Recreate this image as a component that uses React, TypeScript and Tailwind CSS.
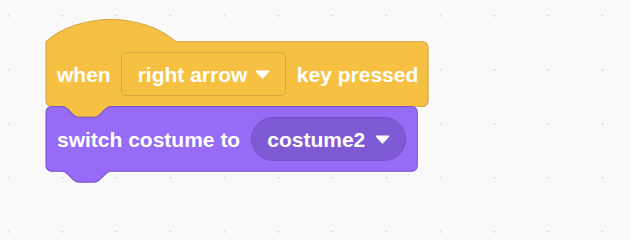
import React from "react";

const S = 1.35;

function hatPath(w: number) {
  return `M 0,0 c 25,-22 71,-22 96,0 H ${w - 4} a 4,4 0 0,1 4,4 V 44 a 4,4 0 0,1 -4,4 H 48 c -2,0 -3,1 -4,2 l -4,4 c -1,1 -2,2 -4,2 h -12 c -2,0 -3,-1 -4,-2 l -4,-4 c -1,-1 -2,-2 -4,-2 H 4 a 4,4 0 0,1 -4,-4 Z`;
}

function stackPath(w: number) {
  return `M 0,4 a 4,4 0 0,1 4,-4 H 12 c 2,0 3,1 4,2 l 4,4 c 1,1 2,2 4,2 h 12 c 2,0 3,-1 4,-2 l 4,-4 c 1,-1 2,-2 4,-2 H ${w - 4} a 4,4 0 0,1 4,4 V 44 a 4,4 0 0,1 -4,4 H 48 c -2,0 -3,1 -4,2 l -4,4 c -1,1 -2,2 -4,2 h -12 c -2,0 -3,-1 -4,-2 l -4,-4 c -1,-1 -2,-2 -4,-2 H 4 a 4,4 0 0,1 -4,-4 Z`;
}

function Arrow() {
  return (
    <svg width="15" height="9" viewBox="0 0 15 9" className="shrink-0">
      <path d="M1.5 1.2 H13.5 L7.5 7.8 Z" fill="#ffffff" stroke="#ffffff" strokeWidth="1.6" strokeLinejoin="round" />
    </svg>
  );
}

export default function App() {
  const font = { fontFamily: '"Liberation Sans", Arial, Helvetica, sans-serif' };
  return (
    <div className="relative w-[630px] h-[240px] overflow-hidden bg-[#f9f9f9]" style={font}>
      <svg className="absolute inset-0" width="630" height="240">
        <defs>
          <pattern id="grid" x="0" y="0" width="54" height="54" patternUnits="userSpaceOnUse">
            <rect x="7.5" y="14.7" width="2" height="2" rx="1" fill="#d8d8d8" />
          </pattern>
        </defs>
        <rect width="630" height="240" fill="url(#grid)" />
      </svg>

      <div className="absolute left-[46px] top-[19px]">
        <svg className="absolute left-0 top-0 overflow-visible" width="400" height="180">
          <g transform={`translate(0, 22.7) scale(${S})`}>
            <path d={hatPath(283)} fill="#f6c143" stroke="#d3a43b" strokeWidth="0.8" />
            <g transform="translate(0, 48)">
              <path d={stackPath(275)} fill="#966bf5" stroke="#7a52d1" strokeWidth="0.8" />
            </g>
          </g>
        </svg>

        <div className="relative flex flex-col pt-[22.7px] text-white font-bold text-[21px] leading-none">
          <div className="flex h-[65px] items-center gap-[10.5px] pl-[11px] pr-[12px]">
            <span>when</span>
            <div className="flex h-[44px] items-center gap-[8px] rounded-[5px] border border-[#d5a73f] bg-[#f6c143] pl-[15.5px] pr-[15px]">
              <span>right arrow</span>
              <Arrow />
            </div>
            <span>key pressed</span>
          </div>
          <div className="flex h-[65px] items-center gap-[11px] pl-[11px]">
            <span>switch costume to</span>
            <div className="flex h-[44px] items-center gap-[10px] rounded-full border border-[#7450c6] bg-[#7f5ad5] pl-[15px] pr-[15px]">
              <span>costume2</span>
              <Arrow />
            </div>
          </div>
        </div>
      </div>
    </div>
  );
}
